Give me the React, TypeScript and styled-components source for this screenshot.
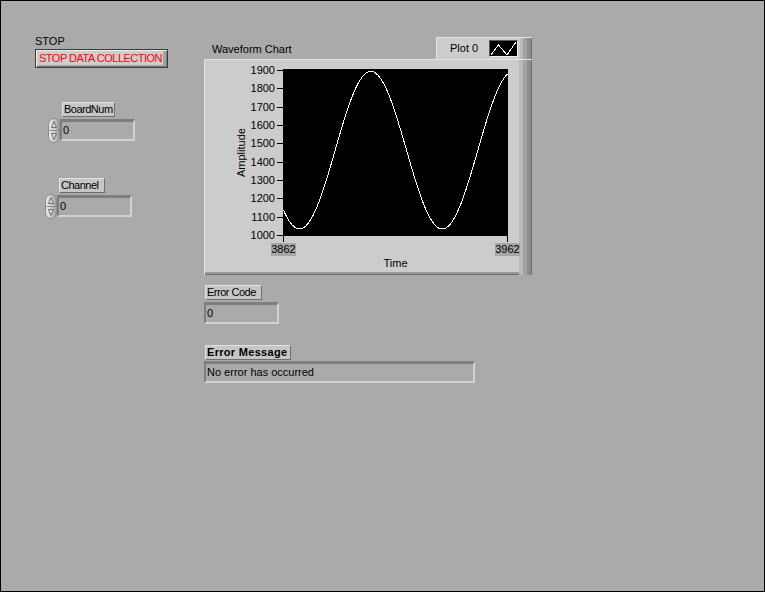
import React from "react";
import styled, { createGlobalStyle } from "styled-components";

const Global = createGlobalStyle`
  html, body { margin: 0; padding: 0; background: #aaaaaa; }
  body {
    font-family: "Liberation Sans", Arial, sans-serif;
    font-size: 11px;
    color: #000;
  }
`;

const Panel = styled.div`
  width: 765px;
  height: 592px;
  box-sizing: border-box;
  border: 1px solid #000;
  background: #aaaaaa;
  display: flex;
  align-items: flex-start;
`;

const LeftColumn = styled.div`
  width: 203px;
  display: flex;
  flex-direction: column;
  align-items: flex-start;
`;

const RightColumn = styled.div`
  display: flex;
  flex-direction: column;
  align-items: flex-start;
  margin-top: 36px;
`;

const Group = styled.div<{ $top: number; $left: number }>`
  display: flex;
  flex-direction: column;
  align-items: flex-start;
  margin-top: ${(p) => p.$top}px;
  margin-left: ${(p) => p.$left}px;
`;

const PlainCaption = styled.div`
  line-height: 13px;
  height: 13px;
  margin-bottom: 1px;
  white-space: nowrap;
`;

const StopButton = styled.button`
  width: 133px;
  height: 19px;
  box-sizing: border-box;
  margin: 0;
  padding: 0 0 0 3px;
  border: 1px solid #3c3c3c;
  background: #cdcdcd;
  box-shadow: inset 1px 1px 0 #eeeeee, inset -1px -1px 0 #7e7e7e,
    inset -4px 0 0 #a4a4a4, inset 0 -2px 0 #a4a4a4;
  color: #ff0000;
  font-family: "Liberation Sans", Arial, sans-serif;
  font-size: 11px;
  letter-spacing: -0.5px;
  line-height: 17px;
  text-align: left;
  white-space: nowrap;
  cursor: default;
`;

const Caption = styled.div<{ $w: number; $offset?: number; $bold?: boolean }>`
  width: ${(p) => p.$w}px;
  height: 15px;
  box-sizing: border-box;
  margin-left: ${(p) => p.$offset ?? 0}px;
  background: #c6c6c6;
  border: 1px solid;
  border-color: #e2e2e2 #6e6e6e #6e6e6e #e2e2e2;
  padding: 0 1px;
  line-height: 13px;
  white-space: nowrap;
  overflow: hidden;
  font-weight: ${(p) => (p.$bold ? 700 : 400)};
  letter-spacing: ${(p) => (p.$bold ? "0.3px" : "-0.5px")};
`;

const ControlRow = styled.div`
  display: flex;
  align-items: flex-start;
  margin-top: 1px;
`;

const NumBox = styled.div<{ $w: number; $top?: number }>`
  width: ${(p) => p.$w}px;
  height: 22px;
  box-sizing: border-box;
  margin-top: ${(p) => p.$top ?? 0}px;
  background: #aaaaaa;
  border-style: solid;
  border-width: 3px 2px 2px 2px;
  border-color: #7e7e7e #d2d2d2 #d2d2d2 #7e7e7e;
  padding-left: 1px;
  display: flex;
  align-items: center;
  line-height: 13px;
  white-space: nowrap;
  overflow: hidden;
`;

const SpinnerSvg = styled.svg`
  display: block;
  flex: none;
`;

function Spinner() {
  return (
    <SpinnerSvg width="12" height="25" viewBox="0 0 12 25">
      <defs>
        <linearGradient id="spg" x1="0" x2="1" y1="0" y2="0">
          <stop offset="0" stopColor="#e8e8e8" />
          <stop offset="0.5" stopColor="#cfcfcf" />
          <stop offset="1" stopColor="#9a9a9a" />
        </linearGradient>
      </defs>
      <rect x="0.5" y="0.5" width="11" height="24" rx="5.5" ry="6" fill="url(#spg)" stroke="#8a8a8a" />
      <line x1="1.5" y1="12.5" x2="10.5" y2="12.5" stroke="#8a8a8a" />
      <polygon points="6,3.5 3.5,9.5 8.5,9.5" fill="#dcdcdc" stroke="#6e6e6e" strokeLinejoin="round" />
      <polygon points="6,21.5 3.5,15.5 8.5,15.5" fill="#dcdcdc" stroke="#6e6e6e" strokeLinejoin="round" />
    </SpinnerSvg>
  );
}

const ChartHeader = styled.div`
  width: 328px;
  height: 22px;
  display: flex;
  align-items: flex-start;
`;

const ChartTitle = styled.div`
  margin: 6px 0 0 8px;
  line-height: 13px;
  white-space: nowrap;
`;

const Legend = styled.div`
  margin-left: auto;
  width: 96px;
  height: 22px;
  box-sizing: border-box;
  background: #cccccc;
  border-top: 1px solid #e4e4e4;
  border-left: 1px solid #e4e4e4;
  box-shadow: inset -1px 0 0 #6c6c6c, inset -5px 0 0 #8c8c8c, inset -9px 0 0 #a2a2a2,
    inset -12px 0 0 #bababa;
  display: flex;
  align-items: center;
  padding-left: 13px;
`;

const LegendName = styled.span`
  line-height: 13px;
  width: 39px;
  white-space: nowrap;
`;

const Swatch = styled.svg`
  display: block;
  border-style: solid;
  border-width: 1px;
  border-color: #5a5a5a #f0f0f0 #f0f0f0 #5a5a5a;
  background: #000;
`;

const ChartFrame = styled.div`
  width: 328px;
  height: 216px;
  box-sizing: border-box;
  background: #cccccc;
  border-top: 1px solid #e4e4e4;
  border-left: 1px solid #e4e4e4;
  box-shadow: inset -1px 0 0 #6c6c6c, inset -5px 0 0 #8c8c8c, inset -9px 0 0 #a2a2a2,
    inset -13px 0 0 #bababa, inset 0 -1px 0 #6c6c6c, inset 0 -3px 0 #9a9a9a;
  padding-top: 9px;
  display: flex;
  flex-direction: column;
`;

const PlotRow = styled.div`
  display: flex;
  height: 167px;
`;

const AxisTitle = styled.div`
  width: 13px;
  height: 167px;
  margin-left: 30px;
  writing-mode: vertical-rl;
  transform: rotate(180deg);
  display: flex;
  align-items: center;
  justify-content: center;
  line-height: 13px;
  white-space: nowrap;
`;

const YAxis = styled.div`
  width: 35px;
  height: 178px;
  margin-top: -5px;
  display: flex;
  flex-direction: column;
  justify-content: space-between;
`;

const YTickRow = styled.div`
  height: 13px;
  display: flex;
  align-items: center;
  justify-content: flex-end;
  gap: 2px;
  line-height: 13px;
`;

const HTick = styled.span`
  width: 6px;
  height: 1px;
  background: #000;
`;

const Plot = styled.div`
  width: 225px;
  height: 167px;
  background: #000;
  flex: none;
`;

const PlotSvg = styled.svg`
  display: block;
`;

const XAxis = styled.div`
  width: 249px;
  margin-left: 66px;
  display: flex;
  justify-content: space-between;
`;

const XTick = styled.div`
  width: 25px;
  display: flex;
  flex-direction: column;
  align-items: center;
`;

const VTick = styled.span`
  width: 1px;
  height: 6px;
  background: #000;
`;

const XLabel = styled.span`
  margin-top: 1px;
  height: 13px;
  width: 25px;
  background: #a6a6a6;
  line-height: 13px;
  text-align: center;
`;

const TimeLabel = styled.div`
  width: 225px;
  margin: 1px 0 0 78px;
  text-align: center;
  line-height: 13px;
`;

const Spacer = styled.div<{ $h: number }>`
  height: ${(p) => p.$h}px;
  flex: none;
`;

const IndentCaption = styled.div`
  margin-left: 1px;
`;

const yTicks = [1900, 1800, 1700, 1600, 1500, 1400, 1300, 1200, 1100, 1000];

function buildWave(): string {
  const pts: string[] = [];
  for (let i = 0; i <= 100; i++) {
    const px = i * 2.25;
    const X = 283 + px;
    const v = 1465.5 - 430 * Math.cos((2 * Math.PI * (X - 299)) / 142.7);
    const y = ((1900 - v) / 900) * 165 + 1.5;
    pts.push(`${(px + 0.5).toFixed(2)},${y.toFixed(2)}`);
  }
  return pts.join(" ");
}

export default function App() {
  const wave = buildWave();
  return (
    <>
      <Global />
      <Panel>
        <LeftColumn>
          <Group $top={34} $left={34}>
            <PlainCaption>STOP</PlainCaption>
            <StopButton type="button">STOP DATA COLLECTION</StopButton>
          </Group>

          <Group $top={34} $left={47}>
            <Caption $w={53} $offset={14}>BoardNum</Caption>
            <ControlRow>
              <Spinner />
              <NumBox $w={75} $top={1}>0</NumBox>
            </ControlRow>
          </Group>

          <Group $top={35} $left={44}>
            <Caption $w={46} $offset={14}>Channel</Caption>
            <ControlRow>
              <Spinner />
              <NumBox $w={75} $top={1}>0</NumBox>
            </ControlRow>
          </Group>
        </LeftColumn>

        <RightColumn>
          <ChartHeader>
            <ChartTitle>Waveform Chart</ChartTitle>
            <Legend>
              <LegendName>Plot 0</LegendName>
              <Swatch width="27" height="15" viewBox="0 0 27 15">
                <polyline
                  points="1,14 8.5,4 17,14 26,1"
                  fill="none"
                  stroke="#fff"
                  strokeWidth="1"
                  shapeRendering="crispEdges"
                />
              </Swatch>
            </Legend>
          </ChartHeader>

          <ChartFrame>
            <PlotRow>
              <AxisTitle>Amplitude</AxisTitle>
              <YAxis>
                {yTicks.map((t) => (
                  <YTickRow key={t}>
                    <span>{t}</span>
                    <HTick />
                  </YTickRow>
                ))}
              </YAxis>
              <Plot>
                <PlotSvg width="225" height="167" viewBox="0 0 225 167">
                  <polyline
                    points={wave}
                    fill="none"
                    stroke="#ffffff"
                    strokeWidth="1"
                    shapeRendering="crispEdges"
                  />
                </PlotSvg>
              </Plot>
            </PlotRow>
            <XAxis>
              <XTick>
                <VTick />
                <XLabel>3862</XLabel>
              </XTick>
              <XTick>
                <VTick />
                <XLabel>3962</XLabel>
              </XTick>
            </XAxis>
            <TimeLabel>Time</TimeLabel>
          </ChartFrame>

          <Spacer $h={10} />
          <IndentCaption>
            <Caption $w={57}>Error Code</Caption>
          </IndentCaption>
          <NumBox $w={75} $top={2}>0</NumBox>

          <Spacer $h={21} />
          <IndentCaption>
            <Caption $w={86} $bold>Error Message</Caption>
          </IndentCaption>
          <NumBox $w={271} $top={1}>No error has occurred</NumBox>
        </RightColumn>
      </Panel>
    </>
  );
}
